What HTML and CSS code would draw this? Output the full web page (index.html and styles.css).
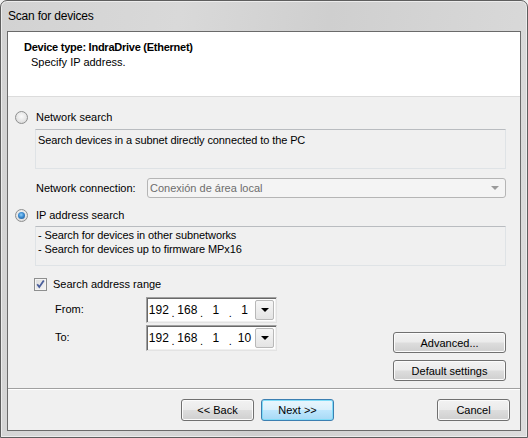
FILE: index.html
```html
<!DOCTYPE html>
<html>
<head>
<meta charset="utf-8">
<link rel="stylesheet" href="styles.css">
</head>
<body>
<div class="window">
  <div class="titlebar">Scan for devices</div>
  <div class="client">
    <div class="header">
      <div class="h-title">Device type: IndraDrive (Ethernet)</div>
      <div class="h-sub">Specify IP address.</div>
    </div>
    <div class="content">
      <div class="radio-row r1"><span class="radio"></span><span>Network search</span></div>
      <div class="desc one">Search devices in a subnet directly connected to the PC</div>
      <div class="conn-row">
        <span class="conn-label">Network connection:</span>
        <div class="combo"><span>Conexión de área local</span><span class="combo-arrow"></span></div>
      </div>
      <div class="radio-row r2"><span class="radio checked"></span><span>IP address search</span></div>
      <div class="desc two">- Search for devices in other subnetworks<br>- Search for devices up to firmware MPx16</div>
      <div class="check-row">
        <span class="checkbox"><svg width="11" height="11" viewBox="0 0 11 11"><path d="M2.2 5.2 L4.3 8 L8.8 1.6" fill="none" stroke="#4a5f9c" stroke-width="1.8"/></svg></span>
        <span>Search address range</span>
      </div>
      <div class="range">
        <div class="ip-rows">
          <div class="ip-row">
            <span class="ip-label">From:</span>
            <div class="ipbox">
              <span class="seg">192</span><span class="dot">.</span><span class="seg">168</span><span class="dot">.</span><span class="seg">1</span><span class="dot">.</span><span class="seg">1</span>
              <span class="ip-arrow"><span class="tri"></span></span>
            </div>
          </div>
          <div class="ip-row">
            <span class="ip-label">To:</span>
            <div class="ipbox">
              <span class="seg">192</span><span class="dot">.</span><span class="seg">168</span><span class="dot">.</span><span class="seg">1</span><span class="dot">.</span><span class="seg">10</span>
              <span class="ip-arrow"><span class="tri"></span></span>
            </div>
          </div>
        </div>
        <div class="side-buttons">
          <button class="btn wide">Advanced...</button>
          <button class="btn wide">Default settings</button>
        </div>
      </div>
    </div>
    <div class="footer">
      <button class="btn back">&lt;&lt; Back</button>
      <button class="btn next default">Next &gt;&gt;</button>
      <button class="btn cancel">Cancel</button>
    </div>
  </div>
</div>
</body>
</html>
```
FILE: styles.css
```css
html, body {
  margin: 0;
  padding: 0;
  background: #f0f0f0;
}
body {
  font-family: "Liberation Sans", Arial, sans-serif;
  font-size: 11px;
  color: #000;
}
.window {
  width: 528px;
  height: 438px;
  box-sizing: border-box;
  border: 1px solid #5e5e5e;
  border-radius: 7px 7px 0 0;
  background: linear-gradient(100deg, #d2d2d2 0%, #d9d9d9 30%, #cfcfcf 55%, #dcdcdc 100%);
  box-shadow: inset 0 0 0 1px #ececec;
  padding: 0 6px 6px 6px;
  display: flex;
  flex-direction: column;
}
.titlebar {
  height: 30px;
  line-height: 31px;
  padding-left: 1px;
  font-size: 12px;
  letter-spacing: -0.2px;
  color: #000;
  flex: none;
}
.client {
  flex: none;
  height: 400px;
  box-sizing: border-box;
  border: 1px solid #6a6a6a;
  background: #f0f0f0;
  display: flex;
  flex-direction: column;
}
.header {
  height: 64px;
  background: #fff;
  border-bottom: 1px solid #dcdcdc;
  box-sizing: content-box;
  flex: none;
}
.h-title {
  font-weight: bold;
  padding: 9px 0 0 16px;
  line-height: 13px;
  letter-spacing: -0.25px;
}
.h-sub {
  padding: 2px 0 0 23px;
  line-height: 13px;
}
.content {
  height: 291px;
  flex: none;
}
.radio-row {
  display: flex;
  align-items: center;
  height: 16px;
}
.r1 { margin-top: 12px; }
.r2 { margin-top: 9px; }
.radio {
  width: 13px;
  height: 13px;
  box-sizing: border-box;
  border-radius: 50%;
  border: 1px solid #8e8f8f;
  background: radial-gradient(circle at 50% 40%, #fafafa 0%, #e6e6e6 55%, #cfcfcf 100%);
  margin: 0 8px 0 7px;
  position: relative;
}
.radio.checked::after {
  content: "";
  position: absolute;
  left: 2px;
  top: 2px;
  width: 7px;
  height: 7px;
  border-radius: 50%;
  background: radial-gradient(circle at 45% 40%, #8fd0fb 0%, #3a8ad0 45%, #1d4f86 100%);
}
.desc {
  margin-left: 27px;
  width: 471px;
  height: 40px;
  box-sizing: border-box;
  border: 1px solid #dfe3e6;
  border-top-color: #b9bcc0;
  background: #f0f0f0;
  padding-left: 2px;
  line-height: 14px;
  letter-spacing: -0.1px;
}
.desc.one { margin-top: 4px; padding-top: 3px; }
.desc.two { margin-top: 3px; padding-top: 1px; }
.conn-row {
  display: flex;
  align-items: center;
  height: 20px;
  margin-top: 9px;
}
.conn-label {
  margin-left: 28px;
  width: 111px;
}
.combo {
  width: 359px;
  height: 20px;
  box-sizing: border-box;
  border: 1px solid #b5b5b5;
  border-radius: 3px;
  background: #f4f4f4;
  color: #6d6d6d;
  display: flex;
  align-items: center;
  justify-content: space-between;
  padding: 0 6px 0 2px;
}
.combo-arrow {
  width: 0;
  height: 0;
  border-left: 4px solid transparent;
  border-right: 4px solid transparent;
  border-top: 4px solid #9a9a9a;
}
.check-row {
  display: flex;
  align-items: center;
  height: 16px;
  margin-top: 10px;
}
.checkbox {
  width: 13px;
  height: 13px;
  box-sizing: border-box;
  border: 1px solid #8e8f8f;
  background: linear-gradient(135deg, #dcdcdc, #f6f6f6);
  box-shadow: inset 0 0 0 1px #f4f4f4;
  margin: 0 6px 0 26px;
  display: flex;
  align-items: center;
  justify-content: center;
}
.checkbox svg { display: block; }
.range {
  display: flex;
  margin-top: 5px;
}
.ip-rows {
  display: flex;
  flex-direction: column;
  gap: 2px;
}
.ip-row {
  display: flex;
  align-items: center;
  height: 26px;
}
.ip-label {
  margin-left: 47px;
  width: 91px;
  align-self: flex-start;
  padding-top: 6px;
}
.ipbox {
  width: 131px;
  height: 26px;
  box-sizing: border-box;
  border: 1px solid #a0a0a0;
  border-right-color: #e3e3e3;
  border-bottom-color: #e3e3e3;
  box-shadow: inset 1px 1px 0 #696969, inset -1px -1px 0 #f0f0f0;
  background: #fff;
  display: flex;
  align-items: center;
  padding-left: 1px;
  font-size: 12px;
}
.seg {
  width: 22px;
  text-align: center;
}
.dot {
  width: 7px;
  text-align: center;
  font-size: 11px;
  position: relative;
  top: 3px;
}
.ip-arrow {
  margin-left: auto;
  margin-right: 2px;
  width: 19px;
  height: 20px;
  box-sizing: border-box;
  border: 1px solid #b8b8b8;
  border-radius: 2px;
  background: linear-gradient(#f6f6f6, #e4e4e4);
  display: flex;
  align-items: center;
  justify-content: center;
}
.tri {
  width: 0;
  height: 0;
  border-left: 4px solid transparent;
  border-right: 4px solid transparent;
  border-top: 4px solid #000;
}
.side-buttons {
  margin-left: auto;
  margin-right: 14px;
  padding-top: 35px;
  display: flex;
  flex-direction: column;
  gap: 7px;
}
.btn {
  font-family: "Liberation Sans", Arial, sans-serif;
  font-size: 11px;
  color: #000;
  height: 22px;
  width: 73px;
  box-sizing: border-box;
  border: 1px solid #707070;
  border-radius: 3px;
  background: linear-gradient(#f2f2f2 0%, #ebebeb 48%, #dddddd 52%, #cfcfcf 100%);
  box-shadow: inset 0 0 0 1px #fbfbfb;
  padding: 0;
  margin: 0;
}
.btn.wide {
  width: 113px;
  height: 21px;
}
.btn.default {
  border-color: #3c7fb1;
  background: linear-gradient(#eaf6fd 0%, #d9f0fc 48%, #bee6fd 52%, #a7d9f5 100%);
  box-shadow: inset 0 0 0 1px #7fdcf8;
}
.footer {
  flex: 1;
  border-top: 1px solid #a0a0a0;
  box-shadow: inset 0 1px 0 #ffffff;
  display: flex;
  align-items: flex-start;
  padding-top: 10px;
}
.back { margin-left: 173px; }
.next { margin-left: 7px; }
.cancel { margin-left: auto; margin-right: 10px; }
```
